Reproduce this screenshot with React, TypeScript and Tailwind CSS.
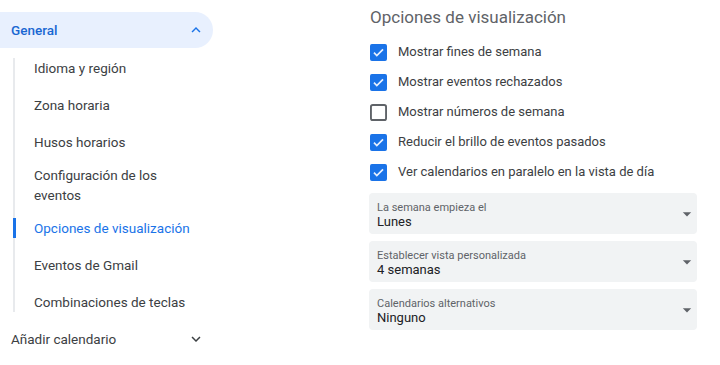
import React from "react";

const font = { fontFamily: "Roboto, 'Liberation Sans', sans-serif" };

function ChevronUp() {
  return (
    <svg width="18" height="18" viewBox="0 0 24 24" fill="#1a73e8">
      <path d="M12 8l-6 6 1.41 1.41L12 10.83l4.59 4.58L18 14z" />
    </svg>
  );
}

function ChevronDown() {
  return (
    <svg width="18" height="18" viewBox="0 0 24 24" fill="#3c4043">
      <path d="M16.59 8.59L12 13.17 7.41 8.59 6 10l6 6 6-6z" />
    </svg>
  );
}

function Check({ checked }: { checked: boolean }) {
  if (!checked)
    return (
      <svg width="17" height="17" viewBox="0 0 18 18">
        <rect x="1" y="1" width="16" height="16" rx="2" fill="white" stroke="#5f6368" strokeWidth="2" />
      </svg>
    );
  return (
    <svg width="17" height="17" viewBox="0 0 18 18">
      <rect x="0" y="0" width="18" height="18" rx="2" fill="#1a73e8" />
      <path d="M4.2 9.2l3 3 6.6-6.6" fill="none" stroke="#e8f0fe" strokeWidth="1.8" />
    </svg>
  );
}

function Arrow() {
  return (
    <svg width="20" height="20" viewBox="0 0 24 24" fill="#5f6368">
      <path d="M7 10l5 5 5-5z" />
    </svg>
  );
}

const options = [
  { label: "Mostrar fines de semana", checked: true },
  { label: "Mostrar eventos rechazados", checked: true },
  { label: "Mostrar números de semana", checked: false },
  { label: "Reducir el brillo de eventos pasados", checked: true },
  { label: "Ver calendarios en paralelo en la vista de día", checked: true },
];

const selects = [
  { label: "La semana empieza el", value: "Lunes" },
  { label: "Establecer vista personalizada", value: "4 semanas" },
  { label: "Calendarios alternativos", value: "Ninguno" },
];

export default function App() {
  return (
    <div className="w-[720px] h-[365px] bg-white flex overflow-hidden" style={font}>
      <div className="w-[213px] shrink-0 pt-3 flex flex-col">
        <div className="h-9 rounded-r-full bg-[#e8f0fe] flex items-center justify-between pl-[11px] pr-2">
          <span className="text-[13.5px] font-medium text-[#1967d2]">General</span>
          <ChevronUp />
        </div>
        <div className="mt-[10px] ml-[13px] border-l-2 border-[#e8eaed] flex flex-col text-[13.5px] leading-5 text-[#3c4043]">
          <div className="pl-[19px]">Idioma y región</div>
          <div className="pl-[19px] mt-[17px]">Zona horaria</div>
          <div className="pl-[19px] mt-[17px]">Husos horarios</div>
          <div className="pl-[19px] mt-[13px] pr-4">Configuración de los eventos</div>
          <div className="pl-[19px] mt-[13px] relative text-[#1a73e8]">
            <div className="absolute left-[-2px] top-0 w-[3px] h-5 bg-[#1a73e8]" />
            Opciones de visualización
          </div>
          <div className="pl-[19px] mt-[17px]">Eventos de Gmail</div>
          <div className="pl-[19px] mt-[17px]">Combinaciones de teclas</div>
        </div>
        <div className="mt-[9px] h-9 flex items-center justify-between pl-[11px] pr-2">
          <span className="text-[13.5px] text-[#3c4043]">Añadir calendario</span>
          <ChevronDown />
        </div>
      </div>
      <div className="ml-[156px] w-[328px] flex flex-col pt-[5px]">
        <div className="h-6 leading-6 text-[17px] text-[#5f6368] pl-px">Opciones de visualización</div>
        <div className="mt-2 flex flex-col">
          {options.map((o) => (
            <div key={o.label} className="h-[30px] flex items-center gap-[11px] pl-px">
              <Check checked={o.checked} />
              <span className="text-[13px] text-[#3c4043]">{o.label}</span>
            </div>
          ))}
        </div>
        <div className="mt-[6px] flex flex-col gap-[7px]">
          {selects.map((s) => (
            <div key={s.label} className="h-[41px] rounded bg-[#f1f3f4] flex items-center justify-between pl-2 pr-0">
              <div className="flex flex-col">
                <span className="text-[11px] leading-4 text-[#5f6368]">{s.label}</span>
                <span className="text-[13px] leading-3 text-[#202124]">{s.value}</span>
              </div>
              <Arrow />
            </div>
          ))}
        </div>
      </div>
    </div>
  );
}
